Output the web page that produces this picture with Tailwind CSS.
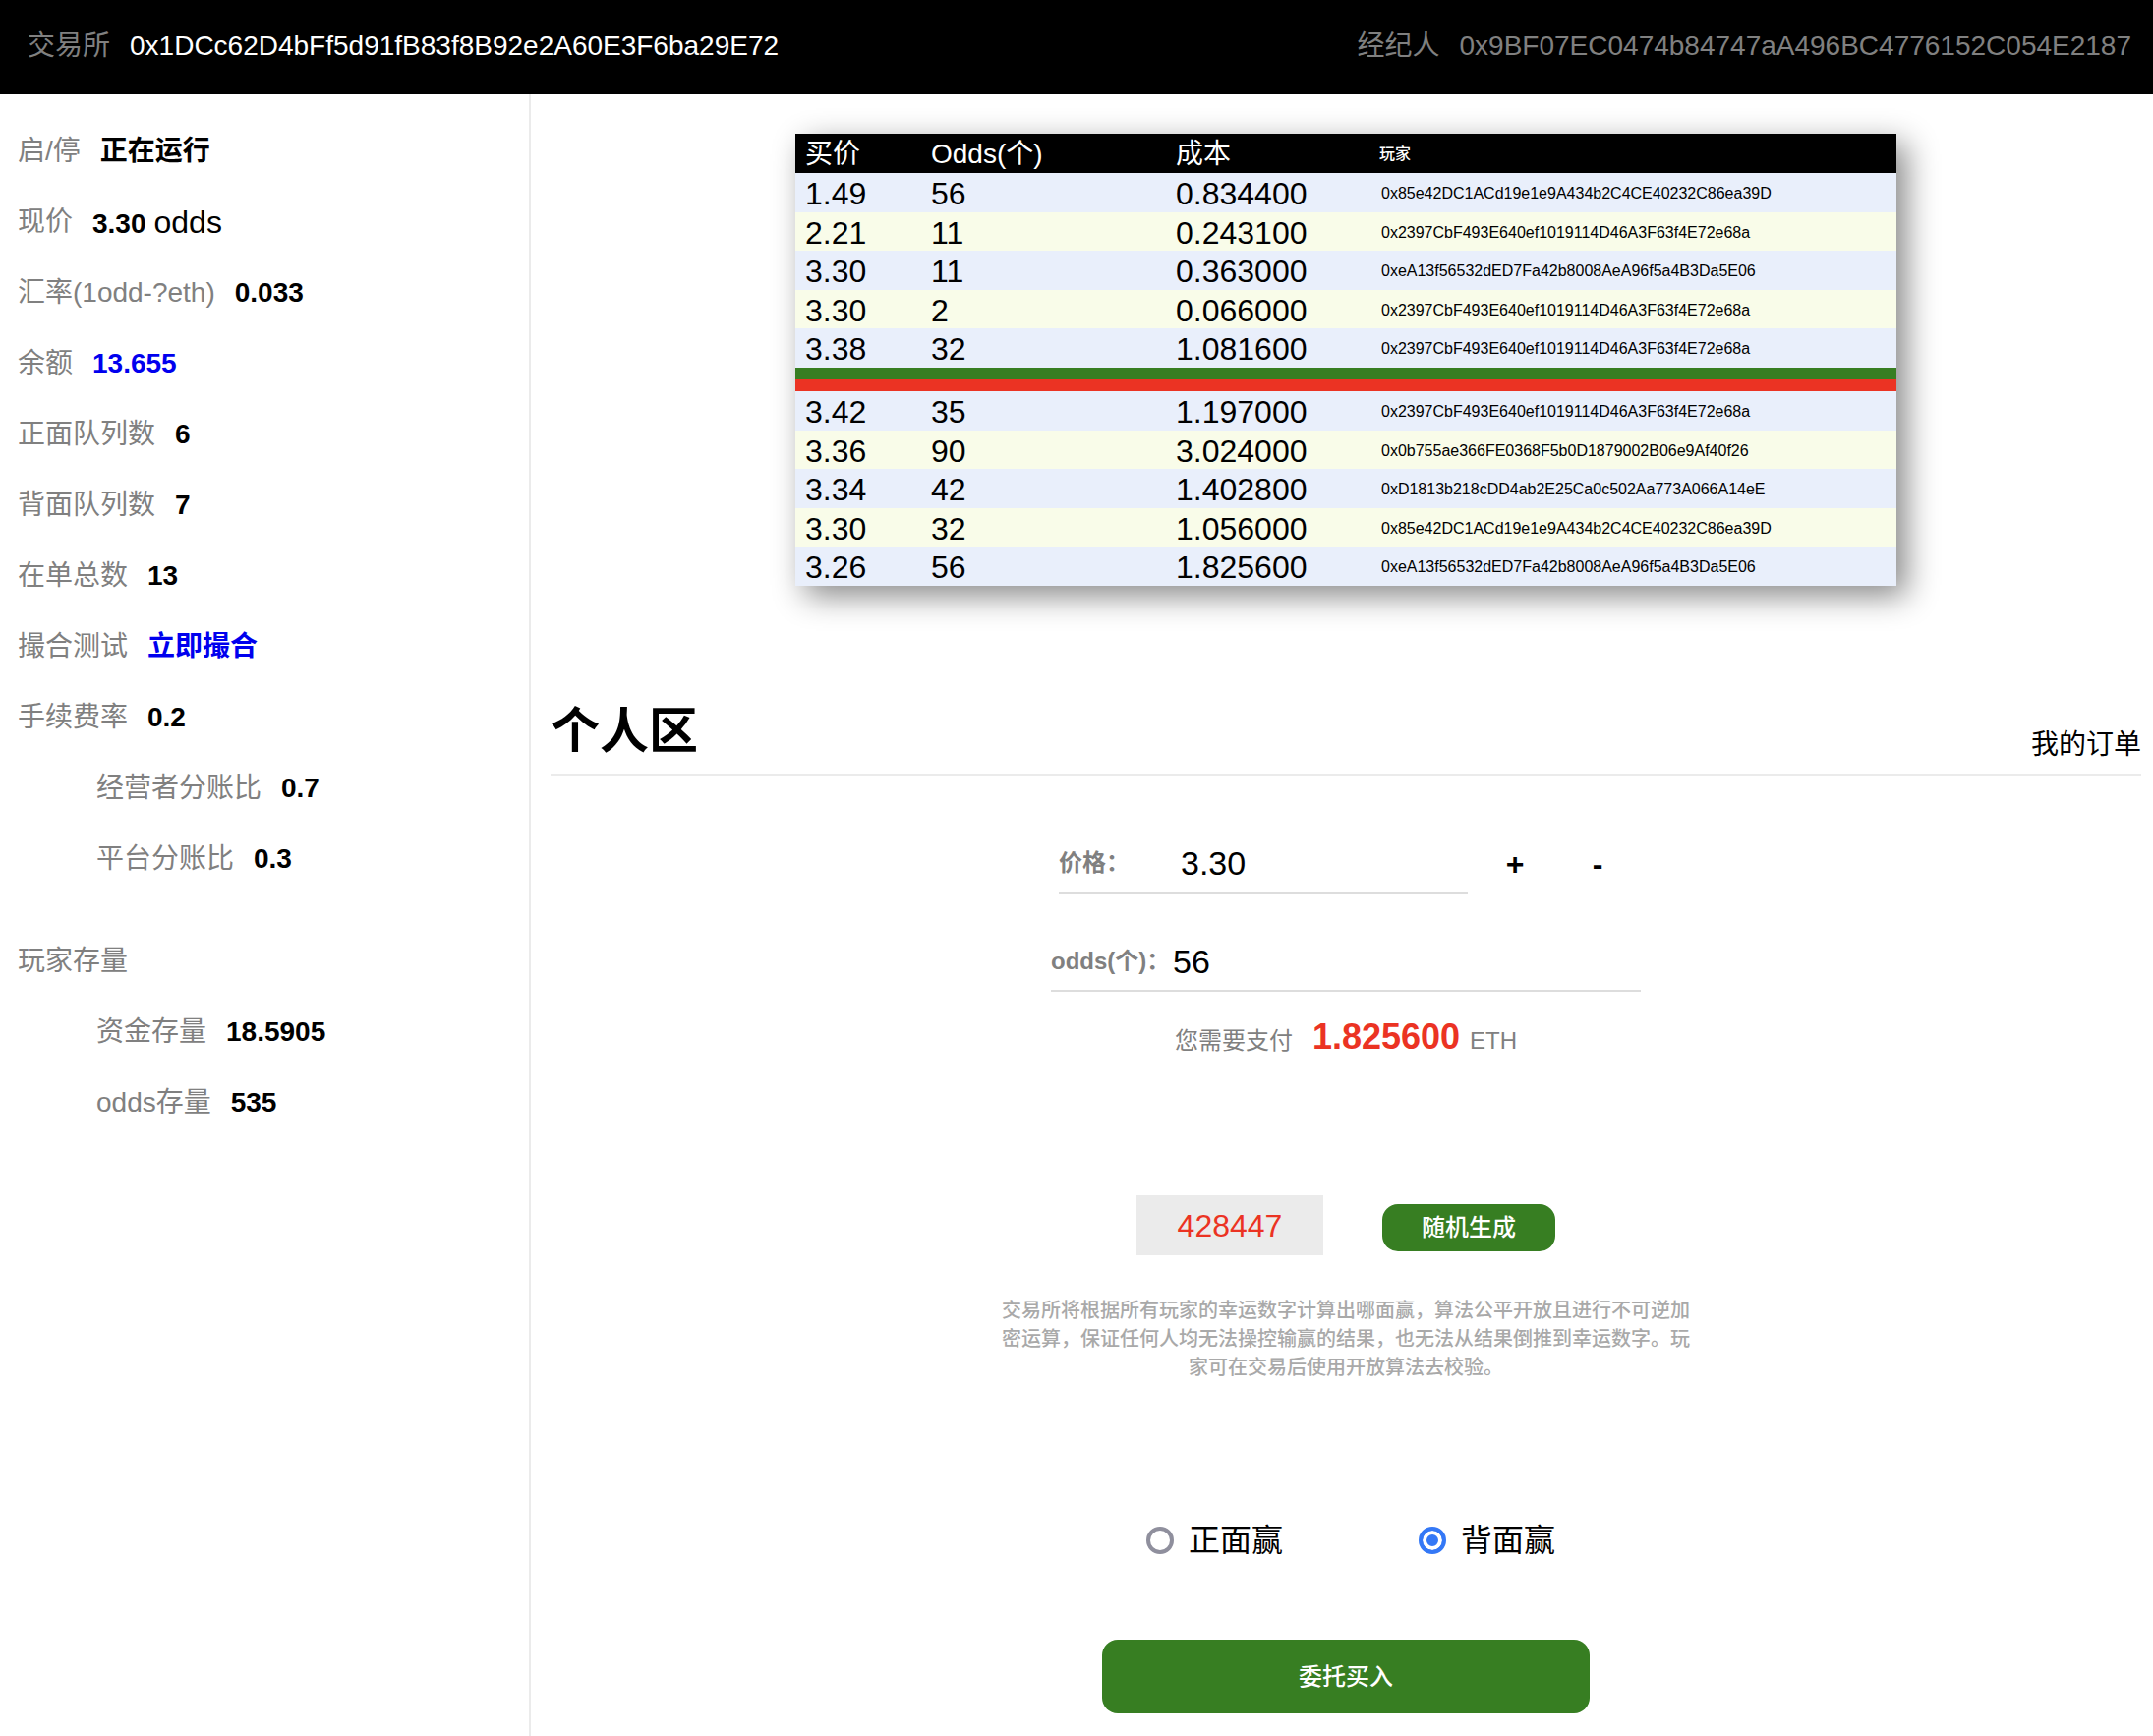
<!DOCTYPE html>
<html lang="zh-CN">
<head>
<meta charset="utf-8">
<meta name="viewport" content="width=device-width, initial-scale=1">
<title>交易所</title>
<script src="https://cdn.jsdelivr.net/npm/@tailwindcss/browser@4"></script>
</head>
<body class="flex min-h-screen flex-col bg-white font-['Liberation_Sans','Noto_Sans_CJK_SC',sans-serif] text-[28px] leading-8 text-black">

<header class="flex h-24 items-center justify-between bg-black pb-0.5 pl-7 pr-[22px]">
  <div class="flex gap-5"><span class="text-[#808080]">交易所</span><span class="text-white">0x1DCc62D4bFf5d91fB83f8B92e2A60E3F6ba29E72</span></div>
  <div class="flex gap-5 text-[#808080]"><span>经纪人</span><span>0x9BF07EC0474b84747aA496BC4776152C054E2187</span></div>
</header>

<div class="flex grow">
  <!-- Exchange status -->
  <aside class="w-[540px] shrink-0 border-r-2 border-[#ebebeb] pl-[18px] pt-[42px]">
    <dl class="flex flex-col gap-10">
      <div class="flex gap-5"><dt class="text-[#808080]">启/停</dt><dd class="font-bold">正在运行</dd></div>
      <div class="flex gap-5"><dt class="text-[#808080]">现价</dt><dd class="flex h-8 items-baseline gap-2"><b>3.30</b><span class="text-[32px]">odds</span></dd></div>
      <div class="flex gap-5"><dt class="text-[#808080]">汇率(1odd-?eth)</dt><dd class="font-bold">0.033</dd></div>
      <div class="flex gap-5"><dt class="text-[#808080]">余额</dt><dd class="font-bold text-[#0000ee]"><a href="#balance">13.655</a></dd></div>
      <div class="flex gap-5"><dt class="text-[#808080]">正面队列数</dt><dd class="font-bold">6</dd></div>
      <div class="flex gap-5"><dt class="text-[#808080]">背面队列数</dt><dd class="font-bold">7</dd></div>
      <div class="flex gap-5"><dt class="text-[#808080]">在单总数</dt><dd class="font-bold">13</dd></div>
      <div class="flex gap-5"><dt class="text-[#808080]">撮合测试</dt><dd class="font-bold text-[#0000ee]"><a href="#match">立即撮合</a></dd></div>
      <div class="flex gap-5"><dt class="text-[#808080]">手续费率</dt><dd class="font-bold">0.2</dd></div>
      <div class="flex gap-5 pl-20"><dt class="text-[#808080]">经营者分账比</dt><dd class="font-bold">0.7</dd></div>
      <div class="flex gap-5 pl-20"><dt class="text-[#808080]">平台分账比</dt><dd class="font-bold">0.3</dd></div>
    </dl>
    <h2 class="mt-18 text-[#808080]">玩家存量</h2>
    <dl class="mt-10 flex flex-col gap-10 pl-20">
      <div class="flex gap-5"><dt class="text-[#808080]">资金存量</dt><dd class="font-bold">18.5905</dd></div>
      <div class="flex gap-5"><dt class="text-[#808080]">odds存量</dt><dd class="font-bold">535</dd></div>
    </dl>
  </aside>

  <main class="grow pb-[22px] pl-5 pr-3 pt-10">
    <!-- Order book -->
    <table class="mx-auto w-full max-w-[1120px] table-fixed border-collapse text-left text-[32px] leading-8 shadow-[10px_10px_30px_#888]">
      <colgroup><col class="w-[128px]"><col class="w-[249px]"><col class="w-[207px]"><col></colgroup>
      <thead class="bg-black text-[28px] text-white">
        <tr class="h-10"><th class="p-0 pl-[10px] pt-0.5 font-normal">买价</th><th class="p-0 pl-[10px] pt-0.5 font-normal">Odds(个)</th><th class="p-0 pl-[10px] pt-0.5 font-normal">成本</th><th class="p-0 pl-[10px] pt-0.5 text-base font-medium">玩家</th></tr>
      </thead>
      <tbody>
        <tr class="h-10 bg-[#e9effb]"><td class="p-0 pl-[10px] pt-0.5">1.49</td><td class="p-0 pl-[10px] pt-0.5">56</td><td class="p-0 pl-[10px] pt-0.5">0.834400</td><td class="p-0 pl-3 pt-0.5 text-base">0x85e42DC1ACd19e1e9A434b2C4CE40232C86ea39D</td></tr>
        <tr class="h-[39px] bg-[#f9fce9]"><td class="p-0 pl-[10px] pt-0.5">2.21</td><td class="p-0 pl-[10px] pt-0.5">11</td><td class="p-0 pl-[10px] pt-0.5">0.243100</td><td class="p-0 pl-3 pt-0.5 text-base">0x2397CbF493E640ef1019114D46A3F63f4E72e68a</td></tr>
        <tr class="h-10 bg-[#e9effb]"><td class="p-0 pl-[10px] pt-0.5">3.30</td><td class="p-0 pl-[10px] pt-0.5">11</td><td class="p-0 pl-[10px] pt-0.5">0.363000</td><td class="p-0 pl-3 pt-0.5 text-base">0xeA13f56532dED7Fa42b8008AeA96f5a4B3Da5E06</td></tr>
        <tr class="h-[39px] bg-[#f9fce9]"><td class="p-0 pl-[10px] pt-0.5">3.30</td><td class="p-0 pl-[10px] pt-0.5">2</td><td class="p-0 pl-[10px] pt-0.5">0.066000</td><td class="p-0 pl-3 pt-0.5 text-base">0x2397CbF493E640ef1019114D46A3F63f4E72e68a</td></tr>
        <tr class="h-10 bg-[#e9effb]"><td class="p-0 pl-[10px] pt-0.5">3.38</td><td class="p-0 pl-[10px] pt-0.5">32</td><td class="p-0 pl-[10px] pt-0.5">1.081600</td><td class="p-0 pl-3 pt-0.5 text-base">0x2397CbF493E640ef1019114D46A3F63f4E72e68a</td></tr>
      </tbody>
      <tbody>
        <tr class="h-3 bg-[#377e22]"><td colspan="4" class="p-0"></td></tr>
        <tr class="h-3 bg-[#eb3323]"><td colspan="4" class="p-0"></td></tr>
      </tbody>
      <tbody>
        <tr class="h-10 bg-[#e9effb]"><td class="p-0 pl-[10px] pt-0.5">3.42</td><td class="p-0 pl-[10px] pt-0.5">35</td><td class="p-0 pl-[10px] pt-0.5">1.197000</td><td class="p-0 pl-3 pt-0.5 text-base">0x2397CbF493E640ef1019114D46A3F63f4E72e68a</td></tr>
        <tr class="h-[39px] bg-[#f9fce9]"><td class="p-0 pl-[10px] pt-0.5">3.36</td><td class="p-0 pl-[10px] pt-0.5">90</td><td class="p-0 pl-[10px] pt-0.5">3.024000</td><td class="p-0 pl-3 pt-0.5 text-base">0x0b755ae366FE0368F5b0D1879002B06e9Af40f26</td></tr>
        <tr class="h-10 bg-[#e9effb]"><td class="p-0 pl-[10px] pt-0.5">3.34</td><td class="p-0 pl-[10px] pt-0.5">42</td><td class="p-0 pl-[10px] pt-0.5">1.402800</td><td class="p-0 pl-3 pt-0.5 text-base">0xD1813b218cDD4ab2E25Ca0c502Aa773A066A14eE</td></tr>
        <tr class="h-[39px] bg-[#f9fce9]"><td class="p-0 pl-[10px] pt-0.5">3.30</td><td class="p-0 pl-[10px] pt-0.5">32</td><td class="p-0 pl-[10px] pt-0.5">1.056000</td><td class="p-0 pl-3 pt-0.5 text-base">0x85e42DC1ACd19e1e9A434b2C4CE40232C86ea39D</td></tr>
        <tr class="h-10 bg-[#e9effb]"><td class="p-0 pl-[10px] pt-0.5">3.26</td><td class="p-0 pl-[10px] pt-0.5">56</td><td class="p-0 pl-[10px] pt-0.5">1.825600</td><td class="p-0 pl-3 pt-0.5 text-base">0xeA13f56532dED7Fa42b8008AeA96f5a4B3Da5E06</td></tr>
      </tbody>
    </table>

    <!-- Personal area -->
    <div class="mt-[118px] flex items-end justify-between border-b-2 border-[#ebebeb] pb-[13px]">
      <h1 class="text-[50px] font-bold leading-[60px]">个人区</h1>
      <a href="#orders">我的订单</a>
    </div>

    <form class="flex flex-col items-center pt-15">
      <div class="flex w-[584px]">
        <div class="flex h-15 w-[416px] items-center border-b-2 border-[#ddd]">
          <label for="price" class="w-[124px] shrink-0 text-2xl font-bold text-[#808080]">价格：</label>
          <input id="price" type="text" value="3.30" class="w-full min-w-0 text-[34px] leading-10 outline-none">
        </div>
        <button type="button" class="w-21 pl-3 text-[32px] font-bold" aria-label="提高价格">+</button>
        <button type="button" class="w-21 pl-3 text-[32px] font-bold" aria-label="降低价格">-</button>
      </div>

      <div class="mt-10 flex h-15 w-[600px] items-center border-b-2 border-[#ddd]">
        <label for="amount" class="w-[124px] shrink-0 whitespace-nowrap text-2xl font-bold text-[#808080]">odds(个)：</label>
        <input id="amount" type="text" value="56" class="w-full min-w-0 text-[34px] leading-10 outline-none">
      </div>

      <p class="mt-7 flex items-baseline text-2xl leading-9 text-[#808080]"><span>您需要支付</span><strong class="ml-5 mr-[10px] text-4xl leading-9 text-[#eb3323]">1.825600</strong><span>ETH</span></p>

      <div class="mt-[139px] flex items-center gap-15">
        <output class="flex h-[61px] w-[190px] items-center justify-center bg-[#ebebeb] text-[32px] text-[#eb3323]">428447</output>
        <button type="button" class="mt-1 h-12 w-44 rounded-2xl bg-[#377e22] text-2xl font-medium text-white">随机生成</button>
      </div>

      <p class="mt-[42px] w-[700px] text-center text-xl leading-[29px] font-medium text-[#a9a9a9]">交易所将根据所有玩家的幸运数字计算出哪面赢，算法公平开放且进行不可逆加密运算，保证任何人均无法操控输赢的结果，也无法从结果倒推到幸运数字。玩家可在交易后使用开放算法去校验。</p>

      <div class="mt-[145px] flex gap-[138px] pl-[10px] text-[32px]">
        <label class="flex items-center gap-[15px]"><input type="radio" name="side" class="size-7 appearance-none rounded-full border-4 border-[#8f8f9d] bg-white checked:border-[#3478f6]">正面赢</label>
        <label class="flex items-center gap-[15px]"><input type="radio" name="side" checked class="size-7 appearance-none rounded-full border-4 border-[#8f8f9d] bg-white checked:border-[#3478f6] checked:bg-[#3478f6] checked:shadow-[inset_0_0_0_4px_#fff]">背面赢</label>
      </div>

      <button type="submit" class="mt-[85px] h-[75px] w-[496px] rounded-2xl bg-[#377e22] text-2xl font-medium text-white">委托买入</button>
    </form>
  </main>
</div>
</body>
</html>
